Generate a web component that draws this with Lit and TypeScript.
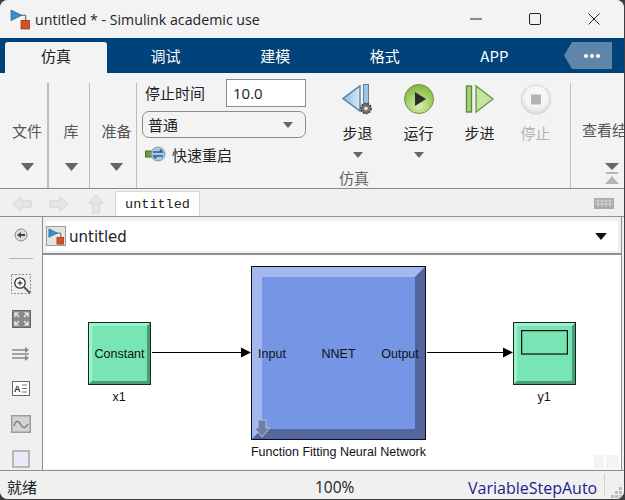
import { LitElement, html, css, svg } from 'lit';
import { customElement } from 'lit/decorators.js';

// small model icon used in the title bar and in the breadcrumb
const modelIcon = (s: number) => html`<svg width=${s} height=${s} viewBox="0 0 20 20">
  <line x1="9" y1="6" x2="15" y2="6" stroke="#555" />
  <line x1="15" y1="6" x2="15" y2="12" stroke="#555" />
  <polygon points="1,1 11,6 1,11" fill="#3a8fcb" stroke="#1f5f92" stroke-width=".7" />
  <rect x="10.5" y="11" width="8" height="8" fill="#d8501c" stroke="#8c3010" stroke-width=".7" />
</svg>`;

const caret = (w: number, h: number, c = '#666') => html`<svg width=${w} height=${h} viewBox="0 0 10 6">
  <polygon points="0,0 10,0 5,6" fill=${c} />
</svg>`;

const navArrow = (rot: number) => html`<svg width="20" height="20" viewBox="0 0 22 22">
  <polygon transform="rotate(${rot} 11 11)" points="1,11 10,3 10,7.5 21,7.5 21,14.5 10,14.5 10,19"
    fill="#e6e6e6" stroke="#d2d2d2" />
</svg>`;

@customElement('app-root')
export class AppRoot extends LitElement {
  static styles = css`
    :host {
      display: block;
      width: 625px;
      height: 500px;
      background: #3b3d40;
      overflow: hidden;
    }
    .window {
      width: 624px;
      height: 499px;
      background: #f0f0f0;
      border-radius: 8px;
      overflow: hidden;
      display: flex;
      flex-direction: column;
      font-family: "Noto Sans CJK SC", "Noto Sans", sans-serif;
      color: #222;
    }
    .titlebar {
      height: 38px;
      flex: none;
      background: #f3f3f3;
      display: flex;
      align-items: center;
      padding-left: 10px;
      font-family: "Open Sans", "Noto Sans", sans-serif;
      font-size: 14.2px;
      color: #222;
    }
    .titlebar .name {
      margin-left: 4px;
      flex: 1;
      white-space: nowrap;
    }
    .caption {
      display: flex;
      align-items: center;
      gap: 47px;
      padding-right: 24px;
    }
    .caption svg {
      display: block;
    }
    .tabs {
      height: 35px;
      flex: none;
      background: #00427a;
      display: flex;
      align-items: flex-end;
      padding-left: 5px;
      position: relative;
      font-size: 15px;
      color: #fff;
    }
    .tab {
      width: 102px;
      height: 31px;
      margin-right: 7.6px;
      display: flex;
      align-items: center;
      justify-content: center;
      padding-bottom: 5px;
      box-sizing: border-box;
    }
    .tab.on {
      background: #f3f3f3;
      color: #222;
      border-radius: 3px 3px 0 0;
    }
    .more {
      position: absolute;
      left: 564px;
      top: 4px;
      width: 48px;
      height: 27px;
      background: #5f86a8;
      clip-path: polygon(8px 0, 100% 0, 100% 100%, 8px 100%, 0 50%);
      display: flex;
      align-items: center;
      justify-content: center;
      gap: 2px;
      padding-left: 8px;
      box-sizing: border-box;
    }
    .more i {
      width: 4px;
      height: 4px;
      border-radius: 50%;
      background: #fff;
    }
    .ribbon {
      height: 115px;
      flex: none;
      background: #f3f3f3;
      border-bottom: 1px solid #8a8a8a;
      display: flex;
      font-size: 15px;
      box-sizing: content-box;
      overflow: hidden;
    }
    .menu {
      margin-top: 10px;
      height: 105px;
      display: flex;
      flex-direction: column;
      align-items: center;
      color: #555;
      border-right: 1px solid #bdbdbd;
      box-sizing: border-box;
      padding-top: 38px;
      gap: 22px;
    }
    .menu span {
      line-height: 20px;
      white-space: nowrap;
    }
    .menu svg {
      display: block;
    }
    .m1 { width: 49px; border-right-width: 2px; padding-left: 7px; }
    .m2 { width: 41px; padding-left: 4px; }
    .m3 { width: 47px; padding-left: 7px; }
    .sim {
      width: 434px;
      display: flex;
      position: relative;
      margin-top: 10px;
      height: 105px;
      border-right: 1px solid #bdbdbd;
      box-sizing: border-box;
    }
    .opts {
      width: 170px;
      flex: none;
      padding: 0 0 0 5px;
      box-sizing: border-box;
      display: flex;
      flex-direction: column;
      margin-top: -4px;
    }
    .stop-row {
      display: flex;
      align-items: center;
      height: 28px;
      padding-left: 3px;
      justify-content: space-between;
    }
    .stop-row span {
      margin-top: -2px;
    }
    .stop-row input {
      width: 80px;
      height: 28px;
      box-sizing: border-box;
      border: 1px solid #8c8c8c;
      background: #fff;
      font: 15px "Open Sans", sans-serif;
      color: #222;
      padding: 0 6px;
      outline: none;
      margin-right: 1px;
    }
    .mode {
      margin-top: 4px;
      width: 164px;
      height: 27px;
      border: 1px solid #8c8c8c;
      border-radius: 7px;
      box-sizing: border-box;
      display: flex;
      align-items: center;
      justify-content: space-between;
      padding: 0 12px 0 5px;
    }
    .restart {
      display: flex;
      align-items: center;
      gap: 6px;
      margin-top: 2px;
      height: 28px;
      padding-left: 3px;
    }
    .btns {
      display: flex;
      padding-left: 20px;
    }
    .btn {
      width: 61px;
      display: flex;
      flex-direction: column;
      align-items: center;
      color: #222;
    }
    .btn svg.ico {
      display: block;
      height: 34px;
    }
    .btn span {
      margin-top: 6px;
      line-height: 20px;
    }
    .btn .c {
      margin-top: 4px;
      line-height: 10px;
      display: block;
    }
    .btn.off {
      margin-left: -5px;
    }
    .btn.off span {
      color: #b4b4b4;
    }
    .grp {
      position: absolute;
      left: 202px;
      bottom: 0;
      line-height: 20px;
      color: #666;
    }
    .view {
      flex: 1;
      margin-top: 10px;
      padding: 37px 0 0 11px;
      color: #555;
      white-space: nowrap;
      position: relative;
      overflow: hidden;
      line-height: 20px;
    }
    .view svg {
      position: absolute;
      left: 33px;
      top: 80px;
    }
    .nav {
      height: 27px;
      flex: none;
      display: flex;
      align-items: flex-end;
      background: #f0f0f0;
      border-bottom: 1px solid #8f8f96;
      position: relative;
      padding-left: 12px;
    }
    .arrows {
      display: flex;
      gap: 17px;
      align-self: center;
      width: 103px;
      padding-top: 3px;
    }
    .arrows svg {
      display: block;
    }
    .filetab {
      width: 85px;
      height: 25px;
      background: #fff;
      border: 1px solid #d6d6d6;
      border-bottom: none;
      box-sizing: border-box;
      font: 13.5px "Liberation Mono", monospace;
      color: #222;
      display: flex;
      align-items: center;
      justify-content: center;
    }
    .kbd {
      position: absolute;
      right: 10px;
      top: 9px;
      display: block;
    }
    .body {
      flex: 1;
      display: flex;
      min-height: 0;
      border-right: 1px solid #8f8f96;
      margin-right: 2px;
    }
    .tools {
      width: 42px;
      flex: none;
      border-right: 1px solid #8f8f96;
      display: flex;
      flex-direction: column;
      align-items: center;
    }
    .tool {
      height: 35px;
      flex: none;
      display: flex;
      align-items: center;
      justify-content: center;
    }
    .tool svg {
      display: block;
    }
    .tools hr {
      width: 24px;
      border: none;
      border-top: 1px solid #b4b4b4;
      margin: 6px 0 7px;
    }
    .main {
      flex: 1;
      display: flex;
      flex-direction: column;
      min-width: 0;
    }
    .crumb {
      height: 38px;
      flex: none;
      background: #f0f0f0;
      padding: 4px 3px 3px 3px;
      box-sizing: border-box;
      border-bottom: 2px solid #8f8f96;
    }
    .crumb-in {
      background: #fff;
      display: flex;
      align-items: center;
      font: 15px "DejaVu Sans", sans-serif;
      color: #222;
      padding: 0 11px 0 0;
      height: 30px;
    }
    .model {
      width: 20px;
      height: 20px;
      box-sizing: border-box;
      background: #e4e4e4;
      border: 1px solid #9a9a9a;
      margin-right: 3px;
      display: flex;
      align-items: center;
      justify-content: center;
    }
    .model svg {
      display: block;
    }
    .crumb .t {
      flex: 1;
      padding-top: 1px;
    }
    .canvas {
      height: 214px;
      flex: none;
      background: #fff;
      position: relative;
      font: 12.5px "Liberation Sans", Arial, sans-serif;
      color: #111;
    }
    .block {
      position: absolute;
      box-sizing: border-box;
      border: 1.5px solid #0c2c22;
      background: #78e6b4;
    }
    .b-const { left: 45px; top: 67px; width: 63px; height: 63px; }
    .b-scope { left: 470px; top: 67px; width: 63px; height: 63px; }
    .b-nnet {
      left: 208px;
      top: 11px;
      width: 175px;
      height: 174px;
      border-color: #0a0a20;
      background: #7596e4;
    }
    .block .edge {
      display: block;
      position: absolute;
      inset: 0;
      width: 100%;
      height: 100%;
    }
    .lab {
      position: absolute;
      white-space: nowrap;
      transform: translateX(-50%);
      line-height: 14px;
    }
    .l-const { left: 76.5px; top: 92px; }
    .l-x1 { left: 76px; top: 135px; }
    .l-in { left: 229px; top: 92px; }
    .l-nnet { left: 295.5px; top: 92px; }
    .l-out { left: 357px; top: 92px; }
    .l-fn { left: 295.5px; top: 190px; }
    .l-y1 { left: 501px; top: 135px; }
    .wire {
      position: absolute;
      left: 0;
      top: 0;
    }
    .mask {
      position: absolute;
      left: 209px;
      top: 164px;
    }
    .grip {
      position: absolute;
      right: 2px;
      bottom: 1px;
      display: flex;
      gap: 2px;
    }
    .grip i {
      background: #f3f3f3;
      height: 13px;
      width: 10px;
    }
    .grip i + i {
      width: 13px;
    }
    .status {
      height: 28px;
      flex: none;
      background: #f0f0f0;
      border-top: 1px solid #8f8f96;
      display: flex;
      align-items: center;
      font-size: 15px;
      position: relative;
    }
    .status .s1 {
      margin-left: 7px;
      padding-top: 2px;
    }
    .status .s2 {
      position: absolute;
      left: 315px;
      margin-top: 3px;
      font: 15.5px "Open Sans", sans-serif;
    }
    .status .s3 {
      position: absolute;
      left: 468px;
      margin-top: 5px;
      font: 16px "Open Sans", sans-serif;
      color: #1c1c8c;
    }
    .status .sep {
      position: absolute;
      left: 604px;
      top: 3px;
      width: 1px;
      height: 22px;
      background: #d0d0d0;
    }
    .status .rz {
      position: absolute;
      left: 611px;
      top: 16px;
    }
  `;

  // raised block shape with the light and dark bevels
  private bevel(w: number, h: number, b: number, light: string, dark: string) {
    return svg`
      <polygon points="0,0 ${w},0 ${w - b},${b} ${b},${b} ${b},${h - b} 0,${h}" fill=${light} />
      <polygon points="${w},0 ${w},${h} 0,${h} ${b},${h - b} ${w - b},${h - b} ${w - b},${b}" fill=${dark} />`;
  }

  render() {
    return html`<div class="window">
      <div class="titlebar">
        ${modelIcon(21)}
        <span class="name">untitled * - Simulink academic use</span>
        <div class="caption">
          <svg width="12" height="12" viewBox="0 0 12 12"><line x1="0" x2="12" y1="6" y2="6" stroke="#222" /></svg>
          <svg width="12" height="12" viewBox="0 0 12 12"><rect x=".5" y=".5" width="11" height="11" rx="1.5" fill="none" stroke="#222" /></svg>
          <svg width="12" height="12" viewBox="0 0 12 12"><path d="M.5 .5 L11.5 11.5 M11.5 .5 L.5 11.5" stroke="#222" /></svg>
        </div>
      </div>

      <div class="tabs">
        <div class="tab on">仿真</div>
        <div class="tab">调试</div>
        <div class="tab">建模</div>
        <div class="tab">格式</div>
        <div class="tab">APP</div>
        <div class="more"><i></i><i></i><i></i></div>
      </div>

      <div class="ribbon">
        <div class="menu m1"><span>文件</span>${caret(15, 8)}</div>
        <div class="menu m2"><span>库</span>${caret(15, 8)}</div>
        <div class="menu m3"><span>准备</span>${caret(15, 8)}</div>

        <div class="sim">
          <div class="opts">
            <div class="stop-row"><span>停止时间</span><input value="10.0" /></div>
            <div class="mode"><span>普通</span>${caret(10, 6)}</div>
            <div class="restart">
              <svg width="21" height="16" viewBox="0 0 21 16">
                <rect x=".5" y="5" width="6" height="6" fill="#6f9c3c" stroke="#4a6e24" />
                <circle cx="13" cy="8" r="7" fill="#a8c8e4" stroke="#7a98b4" />
                <path d="M8 6 H17 L15 3.5 M18 10 H9 L11 12.5" fill="none" stroke="#2b5f90" stroke-width="1.6" />
              </svg>
              <span>快速重启</span>
            </div>
          </div>

          <div class="btns">
            <div class="btn">
              <svg class="ico" width="32" height="34" viewBox="0 0 32 34">
                <defs><linearGradient id="bk" x1="0" x2="1"><stop offset="0" stop-color="#8fbce4" /><stop offset="1" stop-color="#d6e8f8" /></linearGradient></defs>
                <polygon points="18,3 18,28 1,15.5" fill="url(#bk)" stroke="#5f7f9c" stroke-width="1.4" />
                <rect x="21.5" y="1.5" width="5" height="23" fill="#9cc4e8" stroke="#5f7f9c" />
                <circle cx="24" cy="25.5" r="5" fill="#777" stroke="#3c3c3c" stroke-width="1.6" stroke-dasharray="2 1" />
                <circle cx="24" cy="25.5" r="1.8" fill="#eee" />
              </svg>
              <span>步退</span><span class="c">${caret(10, 6)}</span>
            </div>
            <div class="btn">
              <svg class="ico" width="32" height="34" viewBox="0 0 32 34">
                <defs><radialGradient id="g" cx=".5" cy=".75" r=".75"><stop offset="0" stop-color="#d6efa8" /><stop offset="1" stop-color="#7fb53c" /></radialGradient></defs>
                <circle cx="16" cy="16" r="14.5" fill="url(#g)" stroke="#6b9a3a" />
                <polygon points="12,9 12,23 23,16" fill="#2c2c2c" />
              </svg>
              <span>运行</span><span class="c">${caret(10, 6)}</span>
            </div>
            <div class="btn">
              <svg class="ico" width="30" height="34" viewBox="0 0 30 34">
                <rect x="1.5" y="3" width="5" height="26" fill="#a4d474" stroke="#5f8a3c" stroke-width="1.4" />
                <polygon points="11,3 11,29 28,16" fill="#c4e4a4" stroke="#6f9a4c" stroke-width="1.4" />
              </svg>
              <span>步进</span>
            </div>
            <div class="btn off">
              <svg class="ico" width="32" height="34" viewBox="0 0 32 34">
                <defs><radialGradient id="st" cx=".5" cy=".4" r=".6"><stop offset=".6" stop-color="#f6f6f6" /><stop offset="1" stop-color="#dcdcdc" /></radialGradient></defs>
                <circle cx="16" cy="16.5" r="14.5" fill="url(#st)" stroke="#d8d8d8" stroke-width="1.2" />
                <rect x="11" y="11.5" width="10" height="10" fill="#b4b4b4" />
              </svg>
              <span>停止</span>
            </div>
          </div>
          <div class="grp">仿真</div>
        </div>

        <div class="view">
          查看结果
          <svg width="16" height="22" viewBox="0 0 16 22">
            <polygon points="1,0 15,0 8,7" fill="#666" />
            <rect x="2" y="9" width="12" height="2" fill="#b4b4b4" />
            <polygon points="1,21 15,21 8,13" fill="#b4b4b4" />
          </svg>
        </div>
      </div>

      <div class="nav">
        <div class="arrows">
          ${navArrow(0)}${navArrow(180)}${navArrow(90)}
        </div>
        <div class="filetab">untitled</div>
        <svg class="kbd" width="20" height="11" viewBox="0 0 20 11">
          <rect width="20" height="11" fill="#aaa" />
          <path d="M1 3 H19 M1 6 H19 M4 1 V9 M8 1 V9 M12 1 V9 M16 1 V9" stroke="#ddd" stroke-width=".8" />
        </svg>
      </div>

      <div class="body">
        <div class="tools">
          <div class="tool">
            <svg width="14" height="14" viewBox="0 0 14 14">
              <circle cx="7" cy="7" r="6" fill="#ddd" stroke="#888" />
              <polygon points="3,7 7,4 7,6 11,6 11,8 7,8 7,10" fill="#444" />
            </svg>
          </div>
          <hr />
          <div class="tool">
            <svg width="20" height="20" viewBox="0 0 20 20">
              <rect x=".5" y=".5" width="19" height="19" fill="#eee" stroke="#888" stroke-dasharray="2 1.5" />
              <circle cx="9" cy="9" r="5.2" fill="#fff" stroke="#333" stroke-width="1.3" />
              <path d="M6.5 9 H11.5 M9 6.5 V11.5" stroke="#111" />
              <line x1="13" y1="13" x2="19" y2="19" stroke="#555" stroke-width="2" />
            </svg>
          </div>
          <div class="tool">
            <svg width="19" height="18" viewBox="0 0 19 18">
              <rect x=".5" y=".5" width="18" height="17" fill="#8a8a8a" stroke="#666" />
              <path d="M3 7 V3 H7 M12 3 H16 V7 M16 11 V15 H12 M7 15 H3 V11 M3 3 L7 7 M16 3 L12 7 M16 15 L12 11 M3 15 L7 11" fill="none" stroke="#f4f4f4" stroke-width="1.2" />
            </svg>
          </div>
          <div class="tool">
            <svg width="18" height="14" viewBox="0 0 18 14">
              <path d="M0 3 H13 M0 7 H17 M0 11 H13" stroke="#555" />
              <polygon points="13,0 17,3 13,6" fill="#888" />
              <polygon points="13,8 17,11 13,14" fill="#888" />
            </svg>
          </div>
          <div class="tool">
            <svg width="18" height="15" viewBox="0 0 18 15">
              <rect x=".5" y=".5" width="17" height="14" fill="#fff" stroke="#666" />
              <text x="2" y="11" font-size="9" font-weight="700" font-family="Liberation Sans" fill="#333">A</text>
              <path d="M10 4 H15 M10 7.5 H15 M10 11 H15" stroke="#777" />
            </svg>
          </div>
          <div class="tool">
            <svg width="20" height="18" viewBox="0 0 20 18">
              <rect x=".75" y=".75" width="18.5" height="16.5" fill="#d4d4d4" stroke="#9c9c9c" stroke-width="1.5" />
              <path d="M3 11 C5 4 8 6 10 10 C12 14 15 13 17 9" fill="none" stroke="#777" stroke-width="1.4" />
            </svg>
          </div>
          <div class="tool">
            <svg width="18" height="18" viewBox="0 0 18 18">
              <rect x="1" y="1" width="16" height="16" fill="#e8eaf8" stroke="#aaa" stroke-width="1.6" />
            </svg>
          </div>
        </div>

        <div class="main">
          <div class="crumb">
            <div class="crumb-in">
              <span class="model">${modelIcon(17)}</span>
              <span class="t">untitled</span>
              ${caret(12, 7, '#111')}
            </div>
          </div>

          <div class="canvas">
            <svg class="wire" width="578" height="214">
              <line x1="109" x2="200" y1="97.5" y2="97.5" stroke="#000" />
              <polygon points="198,92.5 208,97.5 198,102.5" fill="#000" />
              <line x1="384" x2="460" y1="97.5" y2="97.5" stroke="#000" />
              <polygon points="460,92.5 470,97.5 460,102.5" fill="#000" />
            </svg>

            <div class="block b-const">
              <svg class="edge" viewBox="0 0 60 60" preserveAspectRatio="none">${this.bevel(60, 60, 3, '#a0f0cc', '#4a9c7c')}</svg>
            </div>
            <span class="lab l-const">Constant</span>
            <span class="lab l-x1">x1</span>

            <div class="block b-nnet">
              <svg class="edge" viewBox="0 0 172 172" preserveAspectRatio="none">${this.bevel(172, 172, 10, '#a4b8ee', '#54679c')}</svg>
            </div>
            <span class="lab l-in">Input</span>
            <span class="lab l-nnet">NNET</span>
            <span class="lab l-out">Output</span>
            <svg class="mask" width="20" height="20" viewBox="0 0 20 20">
              <polygon points="6,1 14,1 14,9 18,9 10,18 2,9 6,9" fill="#6f7fa8" stroke="#b4c0dc" />
            </svg>
            <span class="lab l-fn">Function Fitting Neural Network</span>

            <div class="block b-scope">
              <svg class="edge" viewBox="0 0 60 60" preserveAspectRatio="none">${this.bevel(60, 60, 3, '#a0f0cc', '#4a9c7c')}</svg>
              <svg class="edge" viewBox="0 0 60 60">
                <rect x="7.5" y="7.5" width="45" height="23" fill="#78e6b4" stroke="#111" stroke-width="1.2" />
              </svg>
            </div>
            <span class="lab l-y1">y1</span>

            <div class="grip"><i></i><i></i></div>
          </div>
        </div>
      </div>

      <div class="status">
        <span class="s1">就绪</span>
        <span class="s2">100%</span>
        <span class="s3">VariableStepAuto</span>
        <span class="sep"></span>
        <svg class="rz" width="12" height="12" viewBox="0 0 12 12">
          <path d="M8 0 h3 v3 h-3 z M4 4 h3 v3 h-3 z M8 4 h3 v3 h-3 z M0 8 h3 v3 h-3 z M4 8 h3 v3 h-3 z M8 8 h3 v3 h-3 z" fill="#bdbdbd" />
        </svg>
      </div>
    </div>`;
  }
}
